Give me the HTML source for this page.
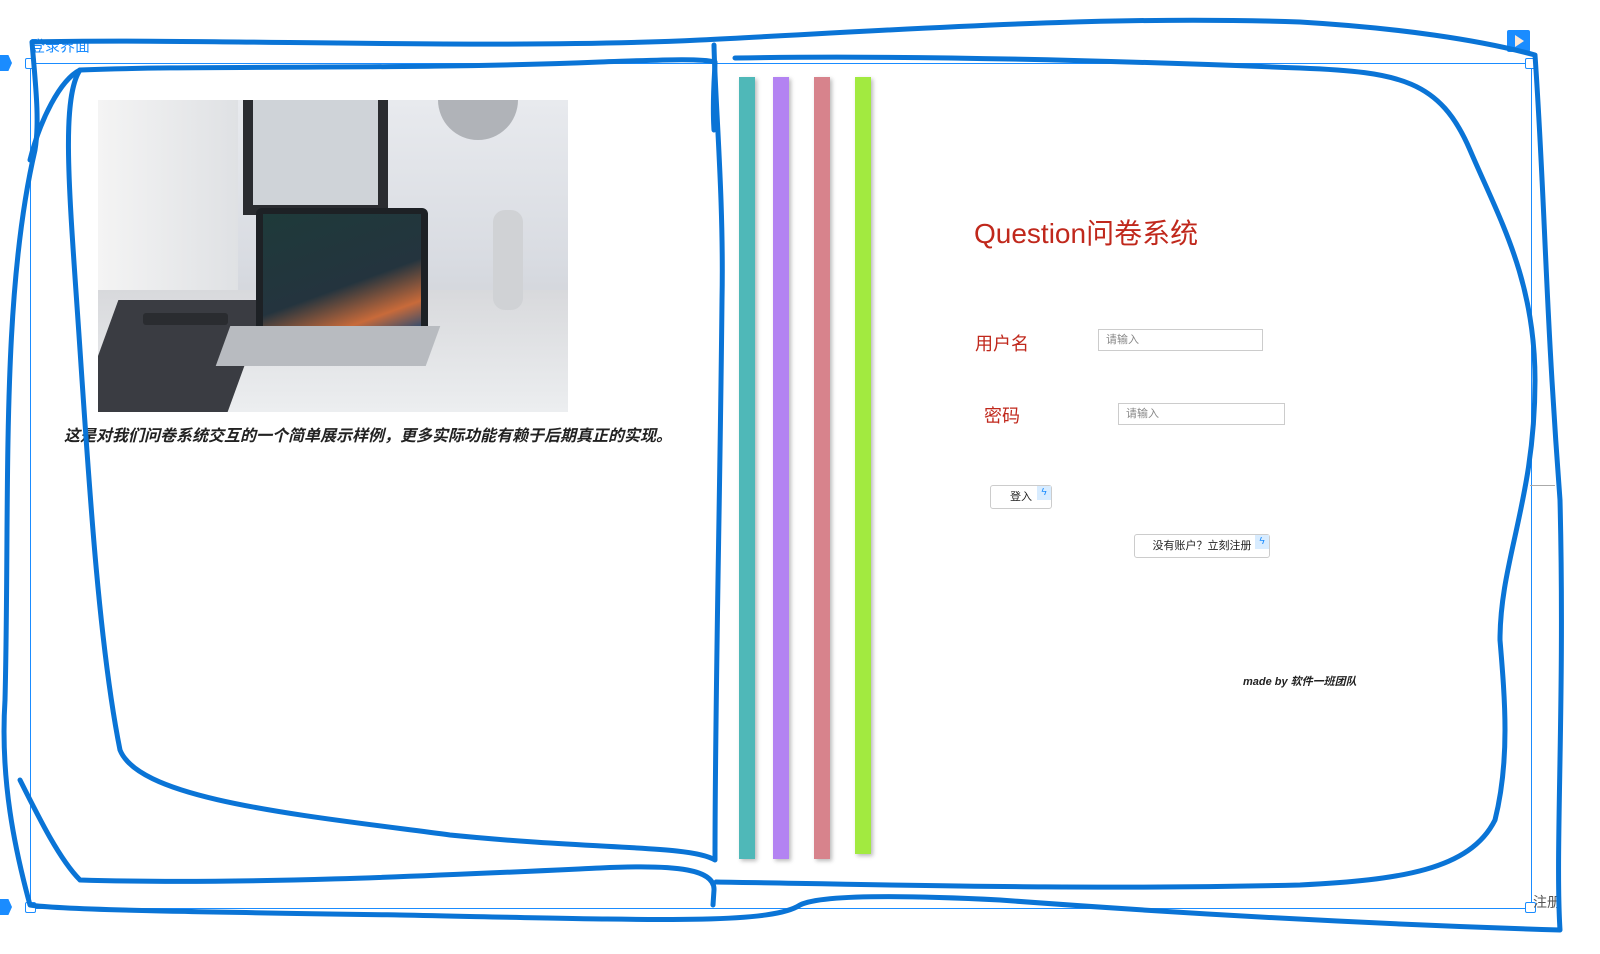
<!DOCTYPE html>
<html><head><meta charset="utf-8"><style>
body{margin:0;width:1600px;height:954px;background:#fff;position:relative;overflow:hidden;font-family:"Liberation Sans","Noto Sans CJK SC",sans-serif}
.a{position:absolute}
.inp{position:absolute;border:1px solid #ccc;height:22px;width:165px;font-size:11px;color:#888;box-sizing:border-box;padding:4px 7px;line-height:13px}
.btn{position:absolute;border:1px solid #ccc;border-radius:3px;background:#fff;font-size:11px;color:#222;box-sizing:border-box;text-align:center}
.bolt{position:absolute;top:0;right:0;width:14px;height:14px;background:#d8ecff;color:#1a8cff;font-size:10px;line-height:14px;text-align:center}
</style></head><body>
<div class="a" style="left:30px;top:35px;font-size:15px;color:#1a8cff">登录界面</div>
<div class="a" style="left:30px;top:63px;width:1500px;height:844px;border:1px solid #1a8cff"></div>
<div class="a" style="left:25px;top:58px;width:9px;height:9px;border:1px solid #1a8cff;background:#fff;border-radius:2px"></div>
<div class="a" style="left:1525px;top:58px;width:9px;height:9px;border:1px solid #1a8cff;background:#fff;border-radius:2px"></div>
<div class="a" style="left:25px;top:902px;width:9px;height:9px;border:1px solid #1a8cff;background:#fff;border-radius:2px"></div>
<div class="a" style="left:1525px;top:902px;width:9px;height:9px;border:1px solid #1a8cff;background:#fff;border-radius:2px"></div>
<div class="a" style="left:0;top:55px;width:12px;height:16px;background:#1a8cff;clip-path:polygon(0 0,70% 0,100% 50%,70% 100%,0 100%)"></div>
<div class="a" style="left:0;top:899px;width:12px;height:16px;background:#1a8cff;clip-path:polygon(0 0,70% 0,100% 50%,70% 100%,0 100%)"></div>
<div class="a" style="left:1507px;top:30px;width:23px;height:22px;background:#1a8cff;border-radius:2px"><div style="position:absolute;left:8px;top:5px;border-left:9px solid #fde8d6;border-top:6px solid transparent;border-bottom:6px solid transparent"></div></div>
<div class="a" style="left:1533px;top:892px;font-size:14px;color:#555">注册</div>
<div class="a" style="left:1530px;top:485px;width:25px;border-top:1px solid #aaa"></div>

<div class="a" style="left:98px;top:100px;width:470px;height:312px;overflow:hidden;background:linear-gradient(180deg,#e8eaee 0%,#d9dce2 50%,#c5c8ce 100%)">
 <div class="a" style="left:0;top:0;width:140px;height:190px;background:linear-gradient(90deg,#f4f4f4,#dfe1e4)"></div>
 <div class="a" style="left:0;top:190px;width:470px;height:122px;background:linear-gradient(180deg,#d8d9dc,#eceef0)"></div>
 <div class="a" style="left:0;top:200px;width:150px;height:112px;background:#3a3c42;transform:skewX(-20deg)"></div>
 <div class="a" style="left:145px;top:0;width:145px;height:115px;background:#2a2c30"></div>
 <div class="a" style="left:155px;top:0;width:125px;height:105px;background:#cfd3d8"></div>
 <div class="a" style="left:158px;top:108px;width:172px;height:125px;background:#1d2125;border-radius:6px"></div>
 <div class="a" style="left:165px;top:114px;width:158px;height:112px;background:linear-gradient(160deg,#1e3a3a,#24343e 60%,#c86a3a 85%,#3a4e6c)"></div>
 <div class="a" style="left:125px;top:226px;width:210px;height:40px;background:#b8bbc0;transform:skewX(-20deg)"></div>
 <div class="a" style="left:340px;top:0;width:80px;height:40px;background:#b0b3b8;border-radius:0 0 40px 40px"></div>
 <div class="a" style="left:395px;top:110px;width:30px;height:100px;background:#d0d2d5;border-radius:12px"></div>
 <div class="a" style="left:45px;top:213px;width:85px;height:12px;background:#2a2c30;border-radius:3px"></div>
</div>
<div class="a" style="left:64px;top:422px;font-size:16px;font-style:italic;font-weight:bold;color:#222;white-space:nowrap">这是对我们问卷系统交互的一个简单展示样例，更多实际功能有赖于后期真正的实现。</div>

<div class="a" style="left:739px;top:77px;width:16px;height:782px;background:#4fb8b8;box-shadow:2px 2px 4px #bbb"></div>
<div class="a" style="left:773px;top:77px;width:16px;height:782px;background:#b383f2;box-shadow:2px 2px 4px #bbb"></div>
<div class="a" style="left:814px;top:77px;width:16px;height:782px;background:#d7838c;box-shadow:2px 2px 4px #bbb"></div>
<div class="a" style="left:855px;top:77px;width:16px;height:777px;background:#a2ea40;box-shadow:2px 2px 4px #bbb"></div>

<div class="a" style="left:974px;top:212px;font-size:28px;color:#c0281c">Question问卷系统</div>
<div class="a" style="left:975px;top:330px;font-size:18px;color:#c0281c">用户名</div>
<div class="inp" style="left:1098px;top:329px">请输入</div>
<div class="a" style="left:984px;top:402px;font-size:18px;color:#c0281c">密码</div>
<div class="inp" style="left:1118px;top:403px;width:167px">请输入</div>
<div class="btn" style="left:990px;top:485px;width:62px;height:24px;line-height:22px">登入<div class="bolt">ϟ</div></div>
<div class="btn" style="left:1134px;top:534px;width:136px;height:24px;line-height:22px">没有账户？立刻注册<div class="bolt">ϟ</div></div>
<div class="a" style="left:1243px;top:673px;font-size:11px;font-style:italic;font-weight:bold;color:#222">made by 软件一班团队</div>

<svg class="a" style="left:0;top:0" width="1600" height="954" fill="none" stroke="#0a74d6" stroke-width="5" stroke-linecap="round" stroke-linejoin="round">
<path d="M32,42 C200,38 500,50 700,40 C900,30 1100,15 1300,22 C1400,28 1480,40 1535,55 C1545,200 1545,300 1560,500 C1565,700 1555,850 1560,930 C1400,925 1200,915 1000,900 C900,895 820,895 800,905 C770,925 650,920 400,915 C200,912 60,910 30,905 C15,850 0,780 5,700 C10,500 0,300 35,150 C40,120 35,80 32,42"/>
<path d="M80,70 C200,65 400,70 600,62 C660,60 700,58 715,62 C715,70 712,100 714,130"/>
<path d="M80,70 C60,100 70,200 80,350 C90,500 100,650 120,750 C140,800 300,815 450,835 C600,850 690,845 715,860 C715,700 720,500 722,300 C724,200 715,100 714,45"/>
<path d="M80,70 C60,80 40,120 30,160"/>
<path d="M80,880 C60,860 40,820 20,780 M80,880 C250,885 450,875 600,868 C680,864 715,870 714,890 L713,905"/>
<path d="M735,58 C900,55 1100,60 1300,68 C1400,72 1440,80 1470,150 C1500,220 1535,280 1535,380 C1535,500 1500,560 1500,640 C1505,700 1510,760 1495,820 C1470,870 1400,880 1300,885 C1100,890 900,885 716,882"/>
</svg>
</body></html>
